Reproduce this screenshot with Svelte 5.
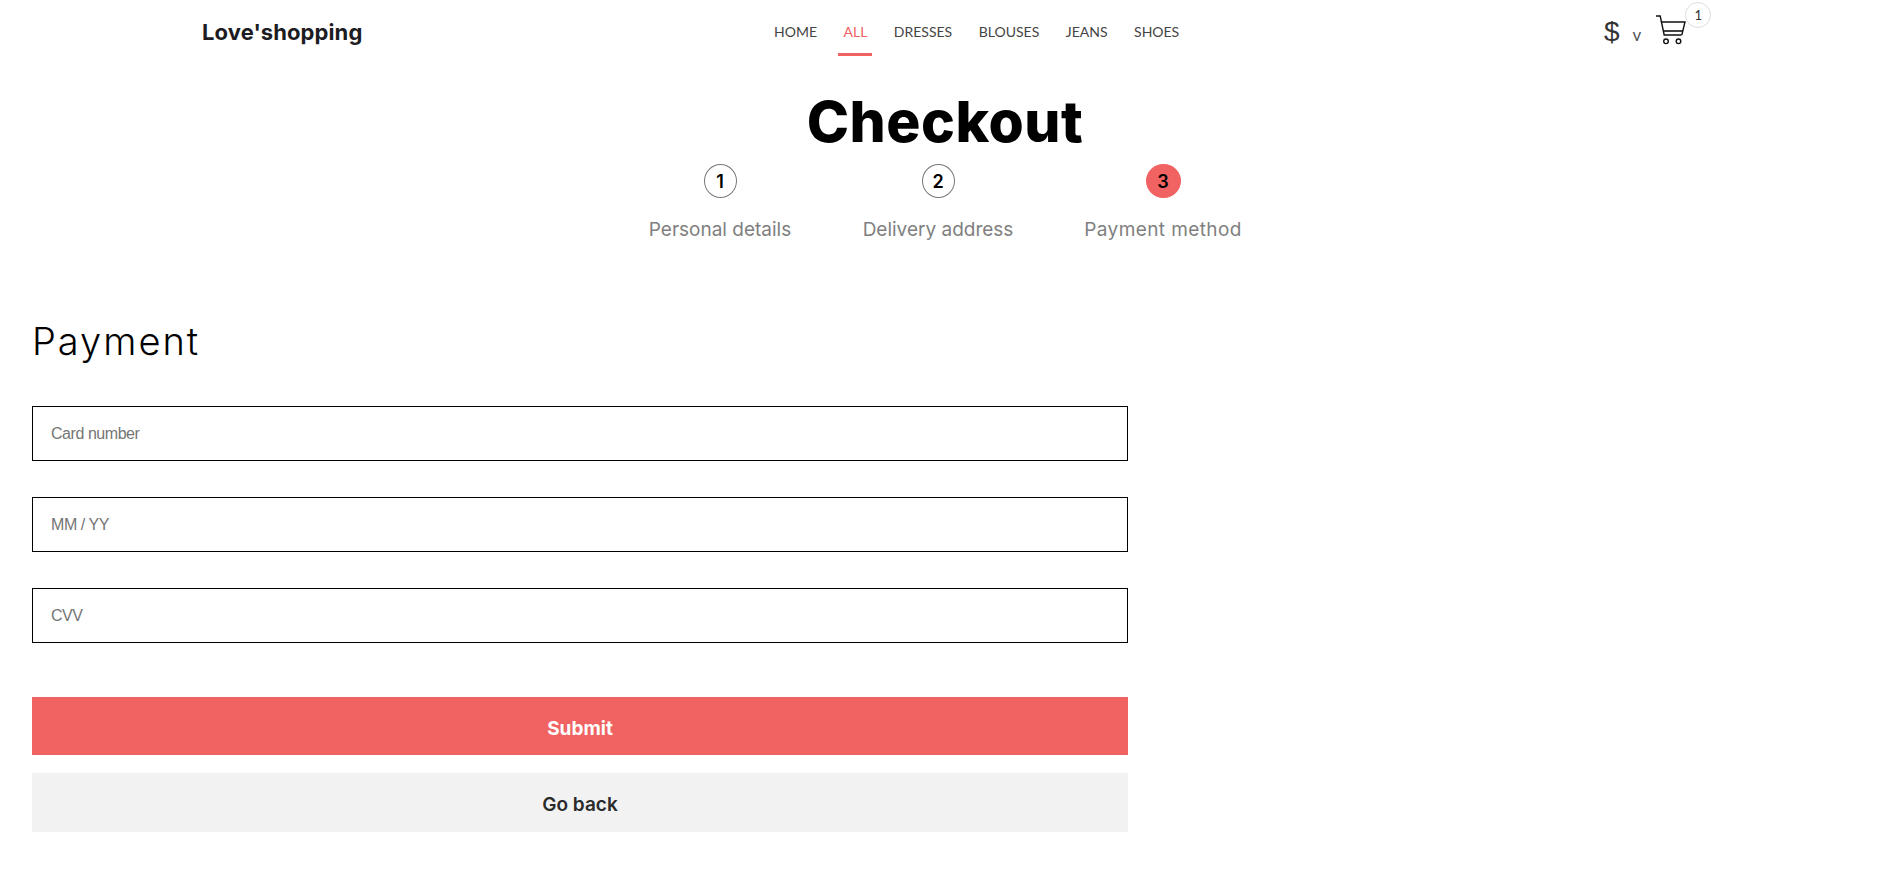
<script>
    const navLinks = ["HOME", "ALL", "DRESSES", "BLOUSES", "JEANS", "SHOES"];
    const steps = [
        { num: 1, label: "Personal details" },
        { num: 2, label: "Delivery address" },
        { num: 3, label: "Payment method", active: true },
    ];
    const fields = ["Card number", "MM / YY", "CVV"];
</script>

<header class="header">
    <a class="logo" href="#top">Love'shopping</a>
    <nav class="nav">
        {#each navLinks as link}
            <a class="nav-link" class:active={link === "ALL"} href="#top">{link}</a>
        {/each}
    </nav>
    <div class="actions">
        <span class="currency">$</span>
        <span class="chevron">v</span>
        <span class="cart">
            <svg width="32" height="32" viewBox="0 0 32 32" fill="none" stroke="#111" stroke-width="1.4">
                <path d="M1 2h4.2l4 19h17.4" />
                <path d="M5.9 8h24.1l-3.2 13" />
                <path d="M8.4 17h19.4" stroke-width="1.6" />
                <circle cx="11" cy="27.3" r="2.3" />
                <circle cx="23.5" cy="27.3" r="2.3" />
            </svg>
            <span class="badge">1</span>
        </span>
    </div>
</header>

<section class="checkout">
    <h1 class="title">Checkout</h1>
    <ol class="steps">
        {#each steps as step}
            <li class="step">
                <span class="step-num" class:active={step.active}>{step.num}</span>
                <span class="step-label">{step.label}</span>
            </li>
        {/each}
    </ol>
</section>

<main class="payment">
    <h2 class="payment-title">Payment</h2>
    <form class="form">
        {#each fields as field}
            <input class="field" type="text" placeholder={field} />
        {/each}
        <button class="btn submit" type="button">Submit</button>
        <button class="btn back" type="button">Go back</button>
    </form>
</main>

<style>
    :global(body) {
        background: #fff;
        font-family: Inter, "Liberation Sans", sans-serif;
    }

    .header {
        display: flex;
        align-items: flex-start;
        height: 56px;
        padding-left: 202px;
    }

    .logo {
        width: 572px;
        margin-top: 19px;
        font-size: 22px;
        font-weight: 700;
        line-height: 27px;
        color: #1c1c22;
        text-decoration: none;
        letter-spacing: 0.1px;
    }

    .nav {
        display: flex;
        gap: 26.5px;
        width: 830px;
    }

    .nav-link {
        height: 53px;
        padding-top: 23px;
        box-sizing: border-box;
        font-family: Lato, sans-serif;
        font-size: 14px;
        line-height: 18px;
        color: #444;
        text-decoration: none;
    }

    .nav-link.active {
        color: #f16262;
        padding: 23px 5px 0;
        margin: 0 -5px;
        height: 56px;
        border-bottom: 3px solid #f16262;
    }

    .actions {
        display: flex;
        align-items: flex-start;
    }

    .currency {
        margin-top: 15px;
        font-family: "Liberation Sans", sans-serif;
        font-size: 28px;
        line-height: 34px;
        color: #333;
    }

    .chevron {
        margin: 26px 0 0 13px;
        font-family: Lato, sans-serif;
        font-size: 17px;
        line-height: 18px;
        color: #555;
    }

    .cart {
        position: relative;
        margin: 14px 0 0 14px;
        height: 32px;
    }

    .badge {
        position: absolute;
        left: 30px;
        top: -12px;
        width: 24px;
        height: 24px;
        border: 1px solid #ddd;
        border-radius: 50%;
        background: #fff;
        display: flex;
        align-items: center;
        justify-content: center;
        font-family: Lato, sans-serif;
        font-size: 13px;
        color: #333;
    }

    .checkout {
        display: flex;
        flex-direction: column;
        align-items: center;
        margin-left: 9px;
    }

    .title {
        margin: 28px 0 0;
        font-size: 57px;
        font-weight: 800;
        line-height: 75px;
        color: #000;
        letter-spacing: 0.5px;
    }

    .steps {
        display: flex;
        gap: 72px;
        margin: 5px 0 0;
        padding: 0;
        list-style: none;
    }

    .step {
        display: flex;
        flex-direction: column;
        align-items: center;
        gap: 18px;
        width: 143px;
    }

    .step:nth-child(2) {
        width: 149px;
    }

    .step:nth-child(3) {
        width: 157px;
    }

    .step-num {
        width: 31px;
        height: 32px;
        border: 1px solid #777;
        border-radius: 50%;
        display: flex;
        align-items: center;
        justify-content: center;
        font-size: 18px;
        font-weight: 600;
        color: #000;
    }

    .step-num.active {
        width: 33px;
        background: #f16262;
        border-color: #f16262;
    }

    .step-label {
        font-size: 19px;
        line-height: 27px;
        color: #808080;
        white-space: nowrap;
    }

    .step:nth-child(3) .step-label {
        letter-spacing: 0.4px;
    }

    .payment {
        margin: 75px 0 0 32px;
        width: 1096px;
    }

    .payment-title {
        margin: 0;
        font-size: 38px;
        font-weight: 300;
        line-height: 47px;
        letter-spacing: 2px;
        color: #000;
    }

    .form {
        display: flex;
        flex-direction: column;
        margin-top: 41px;
    }

    .field {
        height: 55px;
        box-sizing: border-box;
        padding: 0 18px;
        margin-bottom: 36px;
        border: 1px solid #000;
        border-radius: 0;
        font-family: "Liberation Sans", sans-serif;
        font-size: 16px;
        letter-spacing: -0.45px;
        outline: none;
    }

    .field:last-of-type {
        margin-bottom: 54px;
    }

    .btn {
        border: none;
        padding: 4px 0 0;
        font-size: 19px;
        cursor: pointer;
        font-family: inherit;
    }

    .submit {
        height: 58px;
        background: #f16262;
        color: #fff;
        font-weight: 700;
    }

    .back {
        height: 59px;
        margin-top: 18px;
        background: #f2f2f2;
        color: #2b2b2b;
        font-weight: 600;
    }
</style>
